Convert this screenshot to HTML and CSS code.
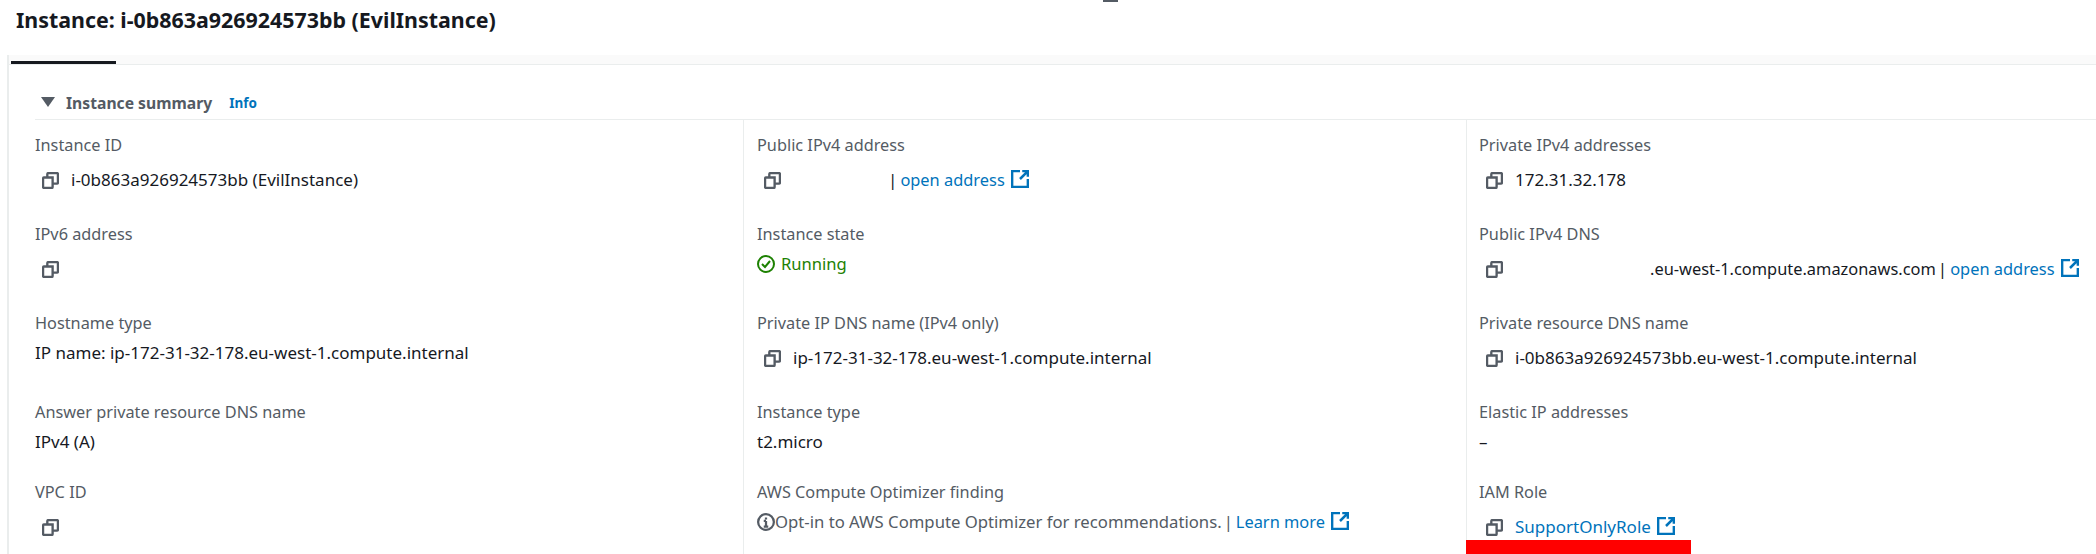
FILE: index.html
```html
<!DOCTYPE html>
<html lang="en">
<head>
<meta charset="utf-8">
<title>Instance summary</title>
<link rel="stylesheet" href="styles.css">
</head>
<body>
<svg class="defs" width="0" height="0" aria-hidden="true">
  <symbol id="copy" viewBox="0 0 16 16"><path d="M10 5.200H2a1 1 0 0 0-1 1V14a1 1 0 0 0 1 1h7a1 1 0 0 0 1-1V5.200z M5 5.200V2a1 1 0 0 1 1-1h8a1 1 0 0 1 1 1v8a1 1 0 0 1-1 1h-4" fill="none" stroke="currentColor" stroke-width="2.200"/></symbol>
  <symbol id="ext" viewBox="0 0 16 16"><path d="M8 1H1v14h14V8 M8 8l7-7 M10 1h5v5" fill="none" stroke="currentColor" stroke-width="2.200"/></symbol>
</svg>
<div class="topmark"></div>
<h1 class="title">Instance: i-0b863a926924573bb (EvilInstance)</h1>
<main class="panel">
  <div class="tabs"><div class="tab"></div></div>
  <section class="summary">
    <header class="summary-head">
      <span class="caret"></span>
      <h2>Instance summary</h2>
      <a class="info">Info</a>
    </header>
    <div class="cols">
      <div class="col col-1">
        <div class="field"><div class="label">Instance ID</div><div class="value copy"><svg class="ic-copy"><use href="#copy"/></svg><span>i-0b863a926924573bb (EvilInstance)</span></div></div>
        <div class="field"><div class="label">IPv6 address</div><div class="value copy"><svg class="ic-copy"><use href="#copy"/></svg></div></div>
        <div class="field"><div class="label">Hostname type</div><div class="value">IP name: ip-172-31-32-178.eu-west-1.compute.internal</div></div>
        <div class="field short"><div class="label">Answer private resource DNS name</div><div class="value">IPv4 (A)</div></div>
        <div class="field"><div class="label">VPC ID</div><div class="value copy"><svg class="ic-copy"><use href="#copy"/></svg></div></div>
      </div>
      <div class="col col-2">
        <div class="field"><div class="label">Public IPv4 address</div><div class="value copy"><svg class="ic-copy"><use href="#copy"/></svg><span class="redact r-ip"></span><span class="sep">|</span><a class="link tight">open address</a><svg class="ic-ext"><use href="#ext"/></svg></div></div>
        <div class="field"><div class="label">Instance state</div><div class="value ok"><svg class="ic-ok" viewBox="0 0 18 18"><circle cx="9" cy="9" r="8" fill="none" stroke="currentColor" stroke-width="2"/><path d="M5 9l3 3 5-6" fill="none" stroke="currentColor" stroke-width="2"/></svg><span>Running</span></div></div>
        <div class="field"><div class="label">Private IP DNS name (IPv4 only)</div><div class="value copy"><svg class="ic-copy"><use href="#copy"/></svg><span>ip-172-31-32-178.eu-west-1.compute.internal</span></div></div>
        <div class="field short"><div class="label">Instance type</div><div class="value">t2.micro</div></div>
        <div class="field"><div class="label">AWS Compute Optimizer finding</div><div class="value muted"><svg class="ic-info" viewBox="0 0 16 16"><circle cx="8" cy="8" r="7" fill="none" stroke="currentColor" stroke-width="2"/><path d="M8 7v5M6 12h4M6 7h2M8 4v1.800" fill="none" stroke="currentColor" stroke-width="2"/></svg><span>Opt-in to AWS Compute Optimizer for recommendations.</span><span class="sep">|</span><a class="link tight">Learn more</a><svg class="ic-ext"><use href="#ext"/></svg></div></div>
      </div>
      <div class="col col-3">
        <div class="field"><div class="label">Private IPv4 addresses</div><div class="value copy"><svg class="ic-copy"><use href="#copy"/></svg><span>172.31.32.178</span></div></div>
        <div class="field"><div class="label">Public IPv4 DNS</div><div class="value copy"><svg class="ic-copy"><use href="#copy"/></svg><span class="redact r-dns"></span><span class="tight">.eu-west-1.compute.amazonaws.com</span><span class="sep">|</span><a class="link tight">open address</a><svg class="ic-ext"><use href="#ext"/></svg></div></div>
        <div class="field"><div class="label">Private resource DNS name</div><div class="value copy"><svg class="ic-copy"><use href="#copy"/></svg><span>i-0b863a926924573bb.eu-west-1.compute.internal</span></div></div>
        <div class="field short"><div class="label">Elastic IP addresses</div><div class="value">–</div></div>
        <div class="field"><div class="label">IAM Role</div><div class="value copy"><svg class="ic-copy"><use href="#copy"/></svg><a class="link">SupportOnlyRole</a><svg class="ic-ext"><use href="#ext"/></svg></div></div>
        <div class="redbar"></div>
      </div>
    </div>
  </section>
</main>
</body>
</html>
```
FILE: styles.css
```css
* { box-sizing: border-box; }
html, body { margin: 0; height: 554px; overflow: hidden; background: #fff; }
body { font-family: "Noto Sans", "Open Sans", sans-serif; font-size: 17px; line-height: 20px; color: #16191f; position: relative; }
.defs { position: absolute; }
.topmark { position: absolute; left: 1103px; top: 0; width: 15px; height: 2px; background: #545b64; }
.title { margin: 0; padding: 8px 0 0 16px; height: 55px; font-size: 21.400px; line-height: 24px; font-weight: 700; }
.panel { margin-left: 7px; border-left: 2px solid #eaeded; padding-left: 2px; height: 499px; }
.tabs { height: 10px; background: #fafafa; border-bottom: 1px solid #eaeded; margin-left: -2px; padding-left: 2px; }
.tab { width: 105px; height: 9px; border-bottom: 3px solid #16191f; margin-bottom: -1px; }
.summary { padding-left: 24px; }
.summary-head { display: flex; align-items: center; height: 55px; padding: 22px 0 0 6px; border-bottom: 1px solid #eaeded; }
.caret { width: 0; height: 0; border-left: 7px solid transparent; border-right: 7px solid transparent; border-top: 10px solid #545b64; margin-right: 11px; margin-top: -2px; }
.summary-head h2 { margin: 0; font-size: 15.700px; line-height: 20px; font-weight: 700; color: #545b64; }
.info { margin-left: 17px; font-size: 13.500px; font-weight: 700; color: #0073bb; }
.cols { display: flex; height: 435px; }
.col { padding-top: 15px; }
.col-1 { width: 708px; }
.col-2, .col-3 { border-left: 1px solid #eaeded; }
.col-2 { width: 723px; padding-left: 13px; }
.col-3 { flex: 1; padding-left: 12px; position: relative; }
.field { height: 89px; }
.field.short { height: 80px; }
.label { height: 20px; margin-bottom: 10px; color: #545b64; font-size: 16.300px; }
.value { display: flex; align-items: center; height: 20px; margin-top: 1px; white-space: nowrap; }
.value.copy { height: 32px; margin-top: -1px; padding-left: 7px; }
.ic-copy { width: 17px; height: 17px; color: #545b64; flex: none; margin-right: 12px; }
.ic-ext { width: 18px; height: 18px; color: #0073bb; flex: none; margin-left: 6px; margin-top: -2px; }
.link { color: #0073bb; }
.tight { font-size: 16.400px; }
.sep { margin: 0 3px 0 2px; }
.redact { display: inline-block; }
.r-ip { width: 93px; }
.r-dns { width: 135px; }
.value.ok { color: #1d8102; font-size: 16.600px; }
.ic-ok { width: 18px; height: 18px; margin-right: 6px; flex: none; }
.value.muted { color: #545b64; font-size: 16.700px; }
.ic-info { width: 18px; height: 18px; flex: none; }
.redbar { position: absolute; left: -1px; bottom: 0; width: 225px; height: 15px; background: #ff0000; }
```
